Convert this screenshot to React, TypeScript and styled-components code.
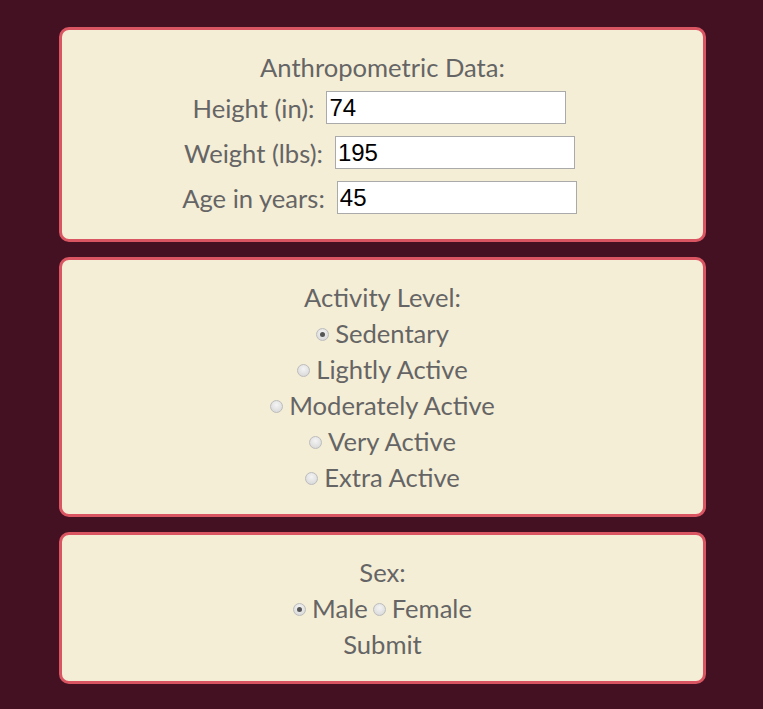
import React from "react";
import styled, { createGlobalStyle } from "styled-components";

const Global = createGlobalStyle`
  html, body { margin: 0; padding: 0; background: #431121; }
  body { font-family: Lato, "Open Sans", sans-serif; }
`;

const Page = styled.div`
  display: flex;
  flex-direction: column;
  gap: 15px;
  padding: 27px 57px 25px 59px;
`;

const Panel = styled.form`
  background: #f5eed7;
  border: 3px solid #da5562;
  border-radius: 10px;
  padding: 19px 0 19px;
  display: flex;
  flex-direction: column;
  align-items: center;
  color: #656565;
  font-size: 25.6px;
`;

const Title = styled.div`
  height: 36px;
  line-height: 36px;
`;

const FieldRow = styled.label`
  height: 45px;
  display: flex;
  align-items: center;
  gap: 12px;
  padding-right: 6px;
`;

const TextInput = styled.input`
  width: 240px;
  height: 33px;
  box-sizing: border-box;
  border: 1px solid #aaaaaa;
  background: #fff;
  padding: 0 2px;
  font-family: "Liberation Sans", Arial, sans-serif;
  font-size: 24px;
  color: #000;
  outline: none;
`;

const OptionLine = styled.div`
  height: 36px;
  display: flex;
  align-items: center;
  justify-content: center;
  gap: 5px;
`;

const Option = styled.label`
  display: flex;
  align-items: center;
  gap: 6px;
`;

const Radio = styled.input.attrs({ type: "radio" })`
  appearance: none;
  margin: 3px 0 0;
  width: 13px;
  height: 13px;
  border-radius: 50%;
  border: 1px solid #bcbcbc;
  background: radial-gradient(circle at 50% 35%, #f4f4f4, #d4d4d4);
  box-sizing: border-box;
  display: grid;
  place-items: center;
  &:checked::after {
    content: "";
    width: 5px;
    height: 5px;
    border-radius: 50%;
    background: #555;
  }
`;

const SubmitButton = styled.button`
  height: 36px;
  border: none;
  background: transparent;
  color: inherit;
  font: inherit;
  padding: 0;
  cursor: pointer;
`;

const activities = [
  "Sedentary",
  "Lightly Active",
  "Moderately Active",
  "Very Active",
  "Extra Active",
];

export default function App() {
  const [activity, setActivity] = React.useState("Sedentary");
  const [sex, setSex] = React.useState("Male");
  return (
    <>
      <Global />
      <Page>
        <Panel onSubmit={(e) => e.preventDefault()}>
          <Title>Anthropometric Data:</Title>
          <FieldRow>
            Height (in): <TextInput defaultValue="74" />
          </FieldRow>
          <FieldRow>
            Weight (lbs): <TextInput defaultValue="195" />
          </FieldRow>
          <FieldRow>
            Age in years: <TextInput defaultValue="45" />
          </FieldRow>
        </Panel>
        <Panel onSubmit={(e) => e.preventDefault()}>
          <Title>Activity Level:</Title>
          {activities.map((a) => (
            <OptionLine key={a}>
              <Option>
                <Radio
                  name="activity"
                  checked={activity === a}
                  onChange={() => setActivity(a)}
                />
                {a}
              </Option>
            </OptionLine>
          ))}
        </Panel>
        <Panel onSubmit={(e) => e.preventDefault()}>
          <Title>Sex:</Title>
          <OptionLine>
            <Option>
              <Radio name="sex" checked={sex === "Male"} onChange={() => setSex("Male")} />
              Male
            </Option>
            <Option>
              <Radio name="sex" checked={sex === "Female"} onChange={() => setSex("Female")} />
              Female
            </Option>
          </OptionLine>
          <SubmitButton type="submit">Submit</SubmitButton>
        </Panel>
      </Page>
    </>
  );
}
